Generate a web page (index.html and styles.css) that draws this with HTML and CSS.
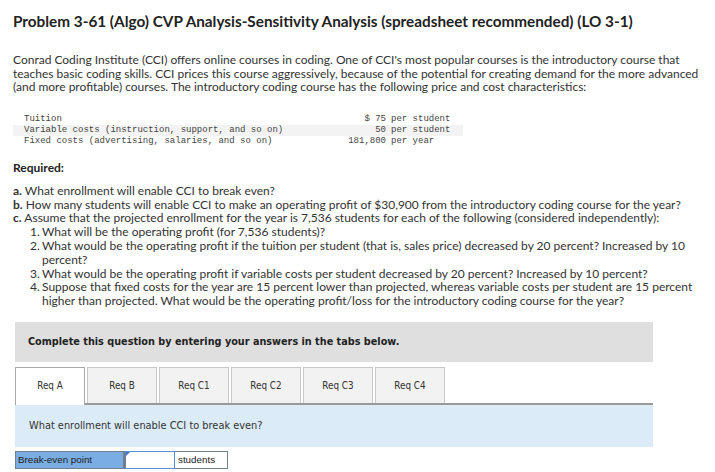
FILE: index.html
```html
<!DOCTYPE html>
<html>
<head>
<meta charset="utf-8">
<link rel="stylesheet" href="styles.css">
</head>
<body>
<div class="page">
  <h1 class="title">Problem 3-61 (Algo) CVP Analysis-Sensitivity Analysis (spreadsheet recommended) (LO 3-1)</h1>
  <p class="intro">Conrad Coding Institute (CCI) offers online courses in coding. One of CCI's most popular courses is the introductory course that teaches basic coding skills. CCI prices this course aggressively, because of the potential for creating demand for the more advanced (and more profitable) courses. The introductory coding course has the following price and cost characteristics:</p>
  <div class="data">
    <div class="drow"><span class="dlabel">Tuition</span><span class="dnum">$ 75</span><span class="dunit">per student</span></div>
    <div class="drow shaded"><span class="dlabel">Variable costs (instruction, support, and so on)</span><span class="dnum">50</span><span class="dunit">per student</span></div>
    <div class="drow"><span class="dlabel">Fixed costs (advertising, salaries, and so on)</span><span class="dnum">181,800</span><span class="dunit">per year</span></div>
  </div>
  <h2 class="req">Required:</h2>
  <div class="list">
    <div class="item"><b>a.</b> What enrollment will enable CCI to break even?</div>
    <div class="item"><b>b.</b> How many students will enable CCI to make an operating profit of $30,900 from the introductory coding course for the year?</div>
    <div class="item"><b>c.</b> Assume that the projected enrollment for the year is 7,536 students for each of the following (considered independently):</div>
    <div class="sub"><span class="num">1.</span><span>What will be the operating profit (for 7,536 students)?</span></div>
    <div class="sub"><span class="num">2.</span><span>What would be the operating profit if the tuition per student (that is, sales price) decreased by 20 percent? Increased by 10 percent?</span></div>
    <div class="sub"><span class="num">3.</span><span>What would be the operating profit if variable costs per student decreased by 20 percent? Increased by 10 percent?</span></div>
    <div class="sub"><span class="num">4.</span><span>Suppose that fixed costs for the year are 15 percent lower than projected, whereas variable costs per student are 15 percent higher than projected. What would be the operating profit/loss for the introductory coding course for the year?</span></div>
  </div>
  <div class="widget">
    <div class="banner">Complete this question by entering your answers in the tabs below.</div>
    <div class="tabs">
      <div class="tab active">Req A</div>
      <div class="tab">Req B</div>
      <div class="tab">Req C1</div>
      <div class="tab">Req C2</div>
      <div class="tab">Req C3</div>
      <div class="tab">Req C4</div>
    </div>
    <div class="panel">What enrollment will enable CCI to break even?</div>
    <div class="answer">
      <div class="alabel">Break-even point</div>
      <div class="ainput"><span class="flag"></span></div>
      <div class="aunit">students</div>
    </div>
  </div>
</div>
</body>
</html>
```

FILE: styles.css
```css
* { box-sizing: border-box; }
html, body { margin: 0; padding: 0; background: #fff; }
.page {
  padding: 12px 10px 0 13px;
  font-family: Lato, "Open Sans", sans-serif;
  color: #333;
}
.title {
  margin: 0;
  font-size: 15.3px;
  font-weight: 700;
  color: #222;
  line-height: 18px;
}
.intro {
  margin: 23px 0 0 0;
  font-size: 12px;
  line-height: 13.6px;
}
.data {
  margin-top: 20px;
  width: 450px;
  font-family: "Liberation Mono", monospace;
  font-size: 9px;
  line-height: 11px;
  color: #444;
}
.drow { display: flex; padding-left: 11px; }
.drow.shaded { background: #f3f3f3; }
.dlabel { flex: 1; }
.dnum { text-align: right; }
.dunit { width: 77px; padding-left: 5px; }
.req {
  margin: 14px 0 0 0;
  font-size: 12px;
  font-weight: 700;
  color: #222;
  line-height: 14px;
}
.list {
  margin-top: 9px;
  font-size: 12px;
  line-height: 13.8px;
}
.item b { font-weight: 700; }
.sub { display: flex; padding-left: 17px; }
.sub .num { width: 12px; flex: none; }
.widget { margin-top: 14px; padding-left: 2px; width: 640px; }
.banner {
  background: #dfdfdf;
  height: 40px;
  display: flex;
  align-items: center;
  padding-left: 13px;
  font-family: "DejaVu Sans", sans-serif;
  font-weight: 700;
  font-size: 9.7px;
  color: #222;
}
.tabs {
  display: flex;
  gap: 2px;
  margin-top: 5px;
  border-bottom: 2px solid #9a9a9a;
}
.tab {
  width: 70px;
  height: 36px;
  display: flex;
  align-items: center;
  justify-content: center;
  background: #f2f2f2;
  border: 1px solid #c9c9c9;
  border-bottom: none;
  font-family: "DejaVu Sans", sans-serif;
  font-stretch: condensed;
  font-size: 9.8px;
  color: #333;
}
.tab.active {
  background: #fff;
  border-color: #a8a8a8;
  margin-bottom: -2px;
  height: 38px;
  padding-bottom: 2px;
}
.panel {
  background: #dbebf8;
  height: 42px;
  display: flex;
  align-items: center;
  padding-left: 14px;
  font-family: "DejaVu Sans", sans-serif;
  font-size: 9.8px;
  color: #333;
}
.answer {
  display: flex;
  margin-top: 4px;
  height: 18px;
  font-family: "Liberation Sans", Arial, sans-serif;
  font-size: 9.8px;
  color: #222;
}
.alabel {
  width: 109px;
  background: #79ade3;
  border: 1px solid #6f7f90;
  display: flex;
  align-items: center;
  padding-left: 2px;
}
.ainput {
  position: relative;
  width: 51px;
  background: #fff;
  border: 1px solid #5b8fd6;
  border-left: 2px solid #6f7f90;
}
.flag {
  position: absolute;
  left: 0;
  top: 0;
  width: 0;
  height: 0;
  border-top: 4px solid #3a78d0;
  border-right: 4px solid transparent;
}
.aunit {
  width: 53px;
  border: 1px solid #6f7f90;
  border-left: none;
  display: flex;
  align-items: center;
  padding-left: 3px;
}
```
